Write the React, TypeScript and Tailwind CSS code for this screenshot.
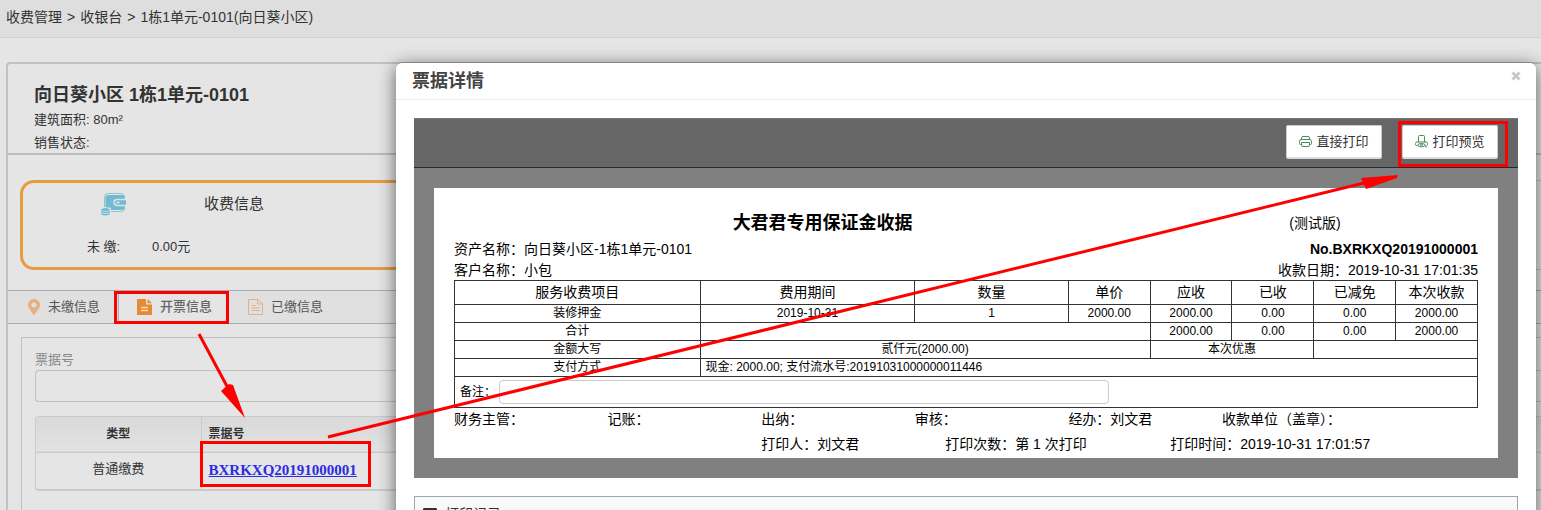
import { FC, ReactNode } from 'react'
import { FaMapMarkerAlt, FaTable } from 'react-icons/fa'

const WalletIcon: FC = () => (
  <svg width="25" height="23" viewBox="0 0 25 23" fill="none" aria-hidden="true">
    <path
      d="M3.500 14V4A3.500 3.500 0 0 1 7 .5h13A3.500 3.500 0 0 1 23.500 4v11a3.500 3.500 0 0 1-3.500 3.500H10"
      stroke="#8cc3d3"
    />
    <path d="M7 2h14.500a2 2 0 0 1 2 2v11a2 2 0 0 1-2 2H10.500l-1.500-2.500H4.500V4.500A2.500 2.500 0 0 1 7 2z" fill="#73b9d0" />
    <path d="M25 6.500h-9a3 3 0 0 0 0 6h9" fill="#73b9d0" stroke="#d5e5ea" strokeWidth="1.500" />
    <path d="M15.500 9.500h3" stroke="#d5e5ea" strokeWidth="2" />
    <path
      d="M0 17c0-1 2-2 4.500-2S9 16 9 17v3.500c0 1-2 2-4.500 2S0 21.500 0 20.500z"
      fill="#73b9d0"
    />
    <path d="M0 17.300c1 1.400 8 1.400 9 0M0 19.500c1 1.400 8 1.400 9 0" stroke="#d5e5ea" strokeWidth=".8" />
  </svg>
)

const FileSolidIcon: FC = () => (
  <svg width="15" height="16" viewBox="0 0 15 16" aria-hidden="true">
    <path d="M0 0h9v5.500h6V16H0z" fill="#e68a35" />
    <path d="M10.500 0L15 4.300h-4.500z" fill="#e68a35" />
    <path d="M4 8.500h7M4 11.500h7" stroke="#f3dcc5" strokeWidth="1.500" />
  </svg>
)

const FileOutlineIcon: FC = () => (
  <svg width="15" height="16" viewBox="0 0 15 16" fill="none" stroke="#e5b184" aria-hidden="true">
    <path d="M.5.5h9.500l4.500 4v11H.5z" />
    <path d="M9.500.5v4.500h5M3.500 6.500h4M3.500 9h8M3.500 11.500h8" />
  </svg>
)

const PrinterIcon: FC = () => (
  <svg width="13" height="12" viewBox="0 0 13 12" fill="none" stroke="#4a8a57" aria-hidden="true">
    <path d="M2.500 4V2a1.500 1.500 0 0 1 1.500-1.500h5A1.500 1.500 0 0 1 10.500 2v2" />
    <path d="M2.500 8.500h-1a1 1 0 0 1-1-1v-2a2 2 0 0 1 2-2h8a2 2 0 0 1 2 2v2a1 1 0 0 1-1 1h-1" />
    <path d="M2.500 6.500h8V9A1.500 1.500 0 0 1 9 10.500H4A1.500 1.500 0 0 1 2.500 9z" />
  </svg>
)

const PreviewIcon: FC = () => (
  <svg width="13" height="13" viewBox="0 0 13 13" fill="none" stroke="#4a8a57" aria-hidden="true">
    <path d="M3.500 7V1.500a1 1 0 0 1 1-1h4a1 1 0 0 1 1 1V7" />
    <path d="M2.500 10.500h-1a1 1 0 0 1-1-1v-1a1.500 1.500 0 0 1 1.500-1.500h9a1.500 1.500 0 0 1 1.500 1.500v1a1 1 0 0 1-1 1" />
    <path d="M2.500 10c1.200-2 6.800-2 8 0-1.200 2.400-6.800 2.400-8 0z" />
    <circle cx="6.500" cy="10" r="1" />
    <path d="M10 11l2 1.500" />
  </svg>
)

interface PrintButtonProps {
  icon: ReactNode
  children: ReactNode
}

const PrintButton: FC<PrintButtonProps> = ({ icon, children }) => (
  <button
    type="button"
    className="flex h-[34px] w-24 items-center justify-center gap-1 rounded-xs border border-b-2 border-[#ccc] border-b-[#ddd] bg-white text-[13px] leading-5 text-[#333]"
  >
    {icon}
    {children}
  </button>
)

interface TabProps {
  icon: ReactNode
  active?: boolean
  children: ReactNode
}

const Tab: FC<TabProps> = ({ icon, active, children }) => (
  <button
    type="button"
    className={
      active
        ? 'flex w-28 items-center gap-2 border-l border-[#a9b1b6] bg-[#e5e5e5] pl-[18px] text-[13px] font-medium text-[#666]'
        : 'flex w-[110px] items-center gap-2 pl-[18px] text-[13px] text-[#555]'
    }
  >
    {icon}
    {children}
  </button>
)

const Cashier: FC = () => (
  <div>
    <nav className="flex h-[38px] items-center gap-[5px] border-b border-[#d2d2d2] bg-[#dedede] px-1.5 pb-1 text-sm text-[#333]">
      <a href="#fees">收费管理</a>
      <span>&gt;</span>
      <a href="#cashier">收银台</a>
      <span>&gt;</span>
      <span>1栋1单元-0101(向日葵小区)</span>
    </nav>

    <main className="mt-6 ml-1.5 rounded-tl border-t-2 border-l-2 border-[#c1c1c6]">
      <header className="h-[91px] border-b-2 border-[#bdbdbf] pt-[18px] pl-[26px] text-[13px] leading-[23px] text-[#333]">
        <h1 className="text-lg leading-[26px] font-bold">向日葵小区 1栋1单元-0101</h1>
        <p>建筑面积: 80m²</p>
        <p>销售状态:</p>
      </header>

      <section className="mt-[25px] flex gap-4 pl-3 text-[#333]">
        <div className="h-[90px] w-[480px] shrink-0 rounded-[14px] border-3 border-[#e69b43]">
          <div className="flex h-[42px] items-center pl-[78px]">
            <WalletIcon />
            <h2 className="ml-[78px] text-[15px]">收费信息</h2>
          </div>
          <div className="flex h-11 items-center pl-16 text-[13px]">
            <span className="w-[65px]">未 缴:</span>
            <span>0.00元</span>
          </div>
        </div>
        <div className="h-[90px] grow border-y border-[#c1c1c6]" />
      </section>

      <div className="mt-5 flex h-[34px] border-y border-[#a3adb3] bg-[#e0e0e0]">
        <Tab icon={<FaMapMarkerAlt className="ml-0.5 w-3 text-base text-[#e5b184]" />}>未缴信息</Tab>
        <Tab active icon={<FileSolidIcon />}>
          开票信息
        </Tab>
        <Tab icon={<FileOutlineIcon />}>已缴信息</Tab>
      </div>

      <section className="mt-[13px] ml-[13px] h-64 border-t border-l border-[#bdbfc3] pt-3 pl-[13px]">
        <label htmlFor="bill-no" className="block text-[13px] leading-5 text-[#888]">
          票据号
        </label>
        <input
          id="bill-no"
          className="block h-8 w-full rounded-l border border-r-0 border-[#bfbfc1] bg-transparent px-2"
        />
        <div className="mt-[14px] rounded-l border border-r-0 border-b-2 border-[#cacaca]">
          <table className="w-full table-fixed text-left text-[#333]">
            <colgroup>
              <col className="w-[165px]" />
              <col />
            </colgroup>
            <thead>
              <tr className="h-[35px] border-b border-[#cacaca] bg-linear-to-b from-[#d9d9d9] to-[#e2e2e2] text-xs">
                <th className="text-center font-bold">类型</th>
                <th className="border-l border-[#cacaca] pl-[7px] font-bold">票据号</th>
              </tr>
            </thead>
            <tbody>
              <tr className="h-[37px]">
                <td className="pb-1 text-center text-[13px]">普通缴费</td>
                <td className="border-l border-[#cacaca] pb-0.5 pl-[7px]">
                  <a
                    href="#BXRKXQ20191000001"
                    className="font-['Liberation_Serif',serif] text-[15px] font-bold text-[#2d2de0] underline"
                  >
                    BXRKXQ20191000001
                  </a>
                </td>
              </tr>
            </tbody>
          </table>
        </div>
      </section>
    </main>
  </div>
)

const cell = 'border border-[#333] p-0 pb-px'

const Receipt: FC = () => (
  <article className="m-5 h-[270px] bg-white px-5 pt-[15px] text-sm leading-5 text-black">
    <div className="flex h-9 items-center pt-1">
      <h3 className="w-[72%] text-center text-lg font-bold">大君君专用保证金收据</h3>
      <span className="pl-[98px]">(测试版)</span>
    </div>
    <div className="flex h-5 items-center justify-between">
      <span>资产名称：向日葵小区-1栋1单元-0101</span>
      <strong>No.BXRKXQ20191000001</strong>
    </div>
    <div className="flex h-[21px] items-center justify-between">
      <span>客户名称：小包</span>
      <span>收款日期：2019-10-31 17:01:35</span>
    </div>
    <table className="w-full table-fixed border-collapse text-center text-xs leading-4">
      <colgroup>
        <col className="w-[24%]" />
        <col className="w-[21%]" />
        <col className="w-[15%]" />
        <col className="w-[8%]" />
        <col className="w-[8%]" />
        <col className="w-[8%]" />
        <col className="w-[8%]" />
        <col className="w-[8%]" />
      </colgroup>
      <thead>
        <tr className="h-6 text-sm leading-5">
          {['服务收费项目', '费用期间', '数量', '单价', '应收', '已收', '已减免', '本次收款'].map((title) => (
            <th key={title} className={`${cell} font-normal`}>
              {title}
            </th>
          ))}
        </tr>
      </thead>
      <tbody>
        <tr className="h-[18px]">
          {['装修押金', '2019-10-31', '1', '2000.00', '2000.00', '0.00', '0.00', '2000.00'].map((value, i) => (
            <td key={i} className={cell}>
              {value}
            </td>
          ))}
        </tr>
        <tr className="h-[18px]">
          <td className={cell}>合计</td>
          <td className={cell} colSpan={3} />
          <td className={cell}>2000.00</td>
          <td className={cell}>0.00</td>
          <td className={cell}>0.00</td>
          <td className={cell}>2000.00</td>
        </tr>
        <tr className="h-[18px]">
          <td className={cell}>金额大写</td>
          <td className={cell} colSpan={3}>
            贰仟元(2000.00)
          </td>
          <td className={cell} colSpan={2}>
            本次优惠
          </td>
          <td className={cell} colSpan={2} />
        </tr>
        <tr className="h-[18px]">
          <td className={cell}>支付方式</td>
          <td className="border border-[#333] pt-0 pb-px pl-[5px] text-left" colSpan={7}>
            现金: 2000.00; 支付流水号:20191031000000011446
          </td>
        </tr>
        <tr className="h-[31px]">
          <td className="border border-[#333] py-0 pl-[5px]" colSpan={8}>
            <div className="flex items-center gap-[3px]">
              <label htmlFor="remark">备注：</label>
              <input id="remark" className="h-6 w-3/5 rounded border border-[#ccc] px-1" />
            </div>
          </td>
        </tr>
      </tbody>
    </table>
    <div className="mt-px flex h-5 items-center whitespace-nowrap">
      <span className="w-[15%]">财务主管：</span>
      <span className="w-[15%]">记账：</span>
      <span className="w-[15%]">出纳：</span>
      <span className="w-[15%]">审核：</span>
      <span className="w-[15%]">经办：刘文君</span>
      <span>收款单位（盖章）：</span>
    </div>
    <div className="mt-[5px] flex h-5 items-center pl-[30%] whitespace-nowrap">
      <span className="w-[18%] shrink-0 basis-[184px]">打印人：刘文君</span>
      <span className="w-[22%] shrink-0 basis-[225px]">打印次数：第 1 次打印</span>
      <span>打印时间：2019-10-31 17:01:57</span>
    </div>
  </article>
)

const BillDialog: FC = () => (
  <div
    role="dialog"
    aria-labelledby="bill-title"
    className="absolute top-[62px] right-[5px] left-[396px] h-[600px] rounded-md border-t border-[#85858c] bg-white shadow-[0_4px_18px_rgba(0,0,0,0.6)]"
  >
    <header className="flex h-[37px] items-center justify-between border-b border-[#eee] pr-[15px] pl-4">
      <h2 id="bill-title" className="text-lg font-bold text-[#444]">
        票据详情
      </h2>
      <button type="button" aria-label="关闭" className="pb-2.5">
        <svg width="10" height="10" viewBox="0 0 10 10" stroke="#c8c8c8" strokeWidth="3">
          <path d="M1.500 1.500l7 7M8.500 1.500l-7 7" />
        </svg>
      </button>
    </header>
    <div className="px-[18px] pt-[18px]">
      <section className="flow-root bg-[#808080]">
        <div className="flex h-[50px] justify-end gap-5 border-t border-b border-t-[#777] border-b-[#1c2b3d] bg-[#666] pt-1.5 pr-5">
          <PrintButton icon={<PrinterIcon />}>直接打印</PrintButton>
          <PrintButton icon={<PreviewIcon />}>打印预览</PrintButton>
        </div>
        <Receipt />
      </section>
      <section className="mt-[18px] h-40 border border-[#9aabb0] bg-[#f9f9f9]">
        <h3 className="flex items-center gap-2 pt-[7px] pl-2 text-sm text-[#333]">
          <FaTable />
          打印记录
        </h3>
      </section>
    </div>
  </div>
)

const Annotations: FC = () => (
  <svg
    className="pointer-events-none absolute top-0 left-0"
    width="1541"
    height="510"
    fill="none"
    stroke="#f00"
    strokeWidth="3"
    aria-hidden="true"
  >
    <rect x="115.500" y="292.500" width="112" height="30" />
    <rect x="201.500" y="442.500" width="168" height="43" />
    <rect x="1399.500" y="122.500" width="107" height="43" />
    <path d="M199 334l30 56M328 437l1036-254" />
    <path d="M221 391l8-7 4 1 12 33zM1361 178l37-3-1 3-31 11z" fill="#f00" stroke="none" />
  </svg>
)

export default function App() {
  return (
    <div className="relative h-screen overflow-hidden bg-[#e5e5e5] font-['Liberation_Sans','Noto_Sans_CJK_SC',sans-serif]">
      <Cashier />
      <BillDialog />
      <Annotations />
    </div>
  )
}
